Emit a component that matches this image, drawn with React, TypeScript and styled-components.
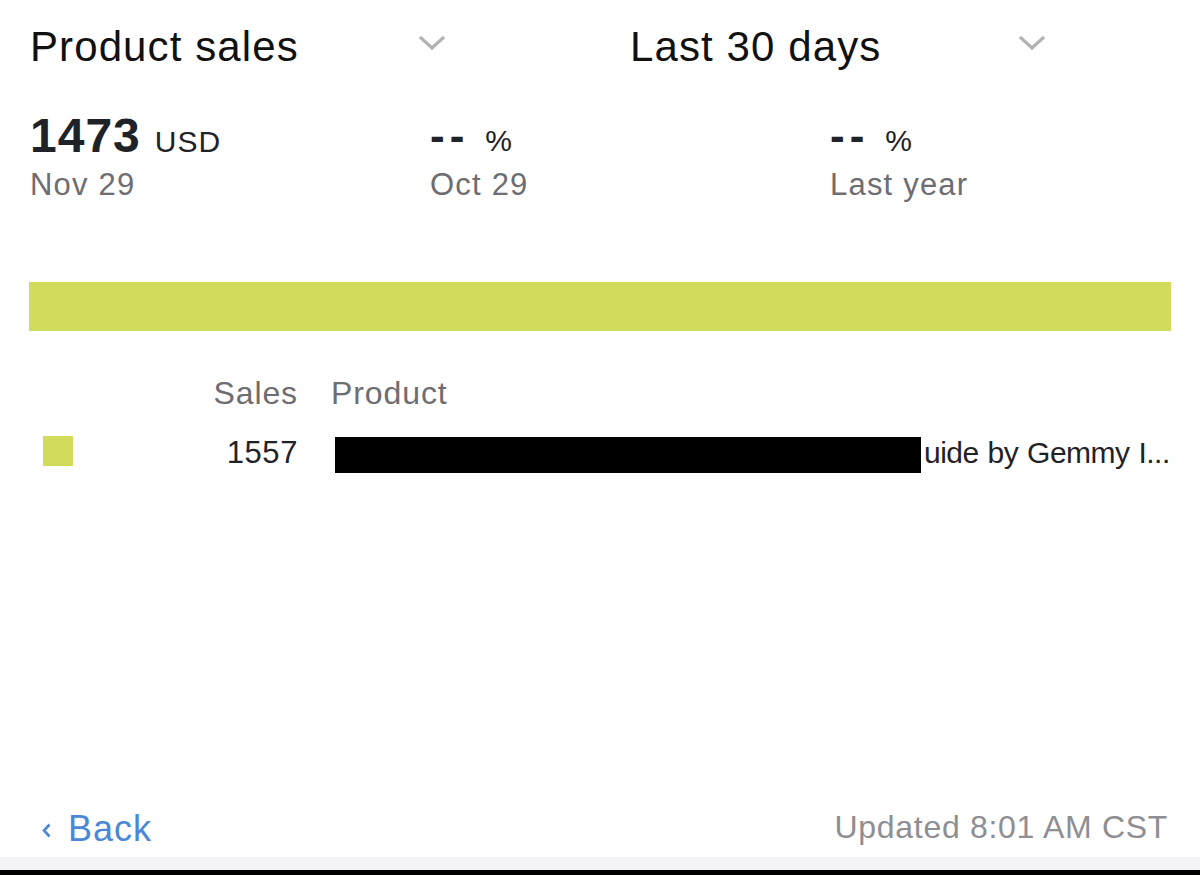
import React from "react";
import styled, { createGlobalStyle } from "styled-components";

const Global = createGlobalStyle`
  html, body { margin: 0; padding: 0; background: #ffffff; }
  body { font-family: "Liberation Sans", Arial, sans-serif; -webkit-font-smoothing: antialiased; }
  * { box-sizing: border-box; }
`;

const Page = styled.div`
  width: 1200px;
  height: 875px;
  display: flex;
  flex-direction: column;
  background: #ffffff;
  overflow: hidden;
`;

const TopBar = styled.div`
  display: grid;
  grid-template-columns: 600px 600px;
  padding-top: 22px;
`;

const Dropdown = styled.div`
  width: 447px;
  padding-left: 30px;
  display: flex;
  justify-content: space-between;
  align-items: center;
  height: 50px;
`;

const DropdownLabel = styled.span`
  font-size: 42px;
  line-height: 50px;
  color: #111111;
  letter-spacing: 1.1px;
`;

const Chevron = styled.svg`
  width: 30px;
  height: 18px;
  margin-top: -8px;
`;

const Stats = styled.div`
  display: grid;
  grid-template-columns: 400px 400px 400px;
  padding-left: 30px;
  margin-top: 36px;
`;

const Stat = styled.div`
  display: flex;
  flex-direction: column;
`;

const ValueLine = styled.div`
  display: flex;
  align-items: baseline;
  height: 56px;
  line-height: 56px;
  color: #1f2226;
`;

const BigNumber = styled.span`
  font-size: 48px;
  font-weight: 700;
  letter-spacing: 1px;
  margin-right: 14px;
`;

const Dashes = styled.span`
  font-size: 44px;
  font-weight: 700;
  letter-spacing: 5px;
  margin-right: 16px;
`;

const Unit = styled.span`
  font-size: 30px;
  font-weight: 400;
  letter-spacing: 1px;
`;

const SubLabel = styled.div`
  margin-top: 3px;
  font-size: 31px;
  line-height: 36px;
  color: #6d6d72;
  letter-spacing: 1.2px;
`;

const Bar = styled.div`
  margin: 79px 29px 0 29px;
  height: 49px;
  background: #d2dc5c;
`;

const Table = styled.div`
  display: grid;
  grid-template-columns: 43px 30px 225px 33px 1fr;
  margin-top: 42px;
  row-gap: 20px;
`;

const HeaderCell = styled.div<{ $align?: string; $col: number }>`
  grid-column: ${(p) => p.$col};
  font-size: 32px;
  line-height: 40px;
  color: #6d6d72;
  text-align: ${(p) => p.$align || "left"};
  letter-spacing: 0.9px;
`;

const Swatch = styled.div<{ $color: string }>`
  grid-column: 2;
  width: 30px;
  height: 30px;
  margin-top: 3px;
  background: ${(p) => p.$color};
`;

const Cell = styled.div<{ $align?: string; $col: number }>`
  grid-column: ${(p) => p.$col};
  font-size: 31px;
  line-height: 40px;
  color: #1f2226;
  letter-spacing: 0.6px;
  white-space: nowrap;
  display: flex;
  align-items: flex-start;
  justify-content: ${(p) => (p.$align === "right" ? "flex-end" : "flex-start")};
`;

const ProductText = styled.span`
  font-size: 30px;
  letter-spacing: -0.5px;
  word-spacing: 1px;
`;

const Redaction = styled.span<{ $width: number }>`
  display: inline-block;
  width: ${(p) => p.$width}px;
  height: 36px;
  margin-top: 4px;
  margin-left: 4px;
  margin-right: 3px;
  background: #000000;
  flex: none;
`;

const Spacer = styled.div`
  flex: 1;
`;

const Footer = styled.div`
  height: 50px;
  display: flex;
  justify-content: space-between;
  align-items: flex-start;
  padding: 0 32px 0 42px;
`;

const BackLink = styled.a`
  display: flex;
  align-items: center;
  gap: 17px;
  font-size: 36px;
  line-height: 44px;
  color: #4a88d6;
  text-decoration: none;
  letter-spacing: 1px;
`;

const BackChevron = styled.svg`
  width: 9px;
  height: 15px;
  margin-top: 2px;
`;

const Updated = styled.span`
  font-size: 32px;
  line-height: 44px;
  margin-top: -2px;
  color: #8e8e93;
  letter-spacing: 0.7px;
`;

const Strip = styled.div`
  height: 13px;
  background: #f2f2f7;
`;

const EdgeLine = styled.div`
  height: 5px;
  background: #000000;
`;

const DownChevron = () => (
  <Chevron viewBox="0 0 30 18">
    <polyline points="3,3 15,14 27,3" fill="none" stroke="#b3b3b3" strokeWidth="3.2" />
  </Chevron>
);

export default function App() {
  return (
    <Page>
      <Global />
      <TopBar>
        <Dropdown>
          <DropdownLabel>Product sales</DropdownLabel>
          <DownChevron />
        </Dropdown>
        <Dropdown>
          <DropdownLabel>Last 30 days</DropdownLabel>
          <DownChevron />
        </Dropdown>
      </TopBar>

      <Stats>
        <Stat>
          <ValueLine>
            <BigNumber>1473</BigNumber>
            <Unit>USD</Unit>
          </ValueLine>
          <SubLabel>Nov 29</SubLabel>
        </Stat>
        <Stat>
          <ValueLine>
            <Dashes>--</Dashes>
            <Unit>%</Unit>
          </ValueLine>
          <SubLabel>Oct 29</SubLabel>
        </Stat>
        <Stat>
          <ValueLine>
            <Dashes>--</Dashes>
            <Unit>%</Unit>
          </ValueLine>
          <SubLabel>Last year</SubLabel>
        </Stat>
      </Stats>

      <Bar />

      <Table>
        <HeaderCell $col={3} $align="right">Sales</HeaderCell>
        <HeaderCell $col={5}>Product</HeaderCell>

        <Swatch $color="#d2dc5c" />
        <Cell $col={3} $align="right">1557</Cell>
        <Cell $col={5}>
          <Redaction $width={586} />
          <ProductText>uide by Gemmy I...</ProductText>
        </Cell>
      </Table>

      <Spacer />

      <Footer>
        <BackLink href="#">
          <BackChevron viewBox="0 0 9 15">
            <polyline points="7.5,1.5 2,7.5 7.5,13.5" fill="none" stroke="#4a88d6" strokeWidth="2.6" />
          </BackChevron>
          Back
        </BackLink>
        <Updated>Updated 8:01 AM CST</Updated>
      </Footer>
      <Strip />
      <EdgeLine />
    </Page>
  );
}
